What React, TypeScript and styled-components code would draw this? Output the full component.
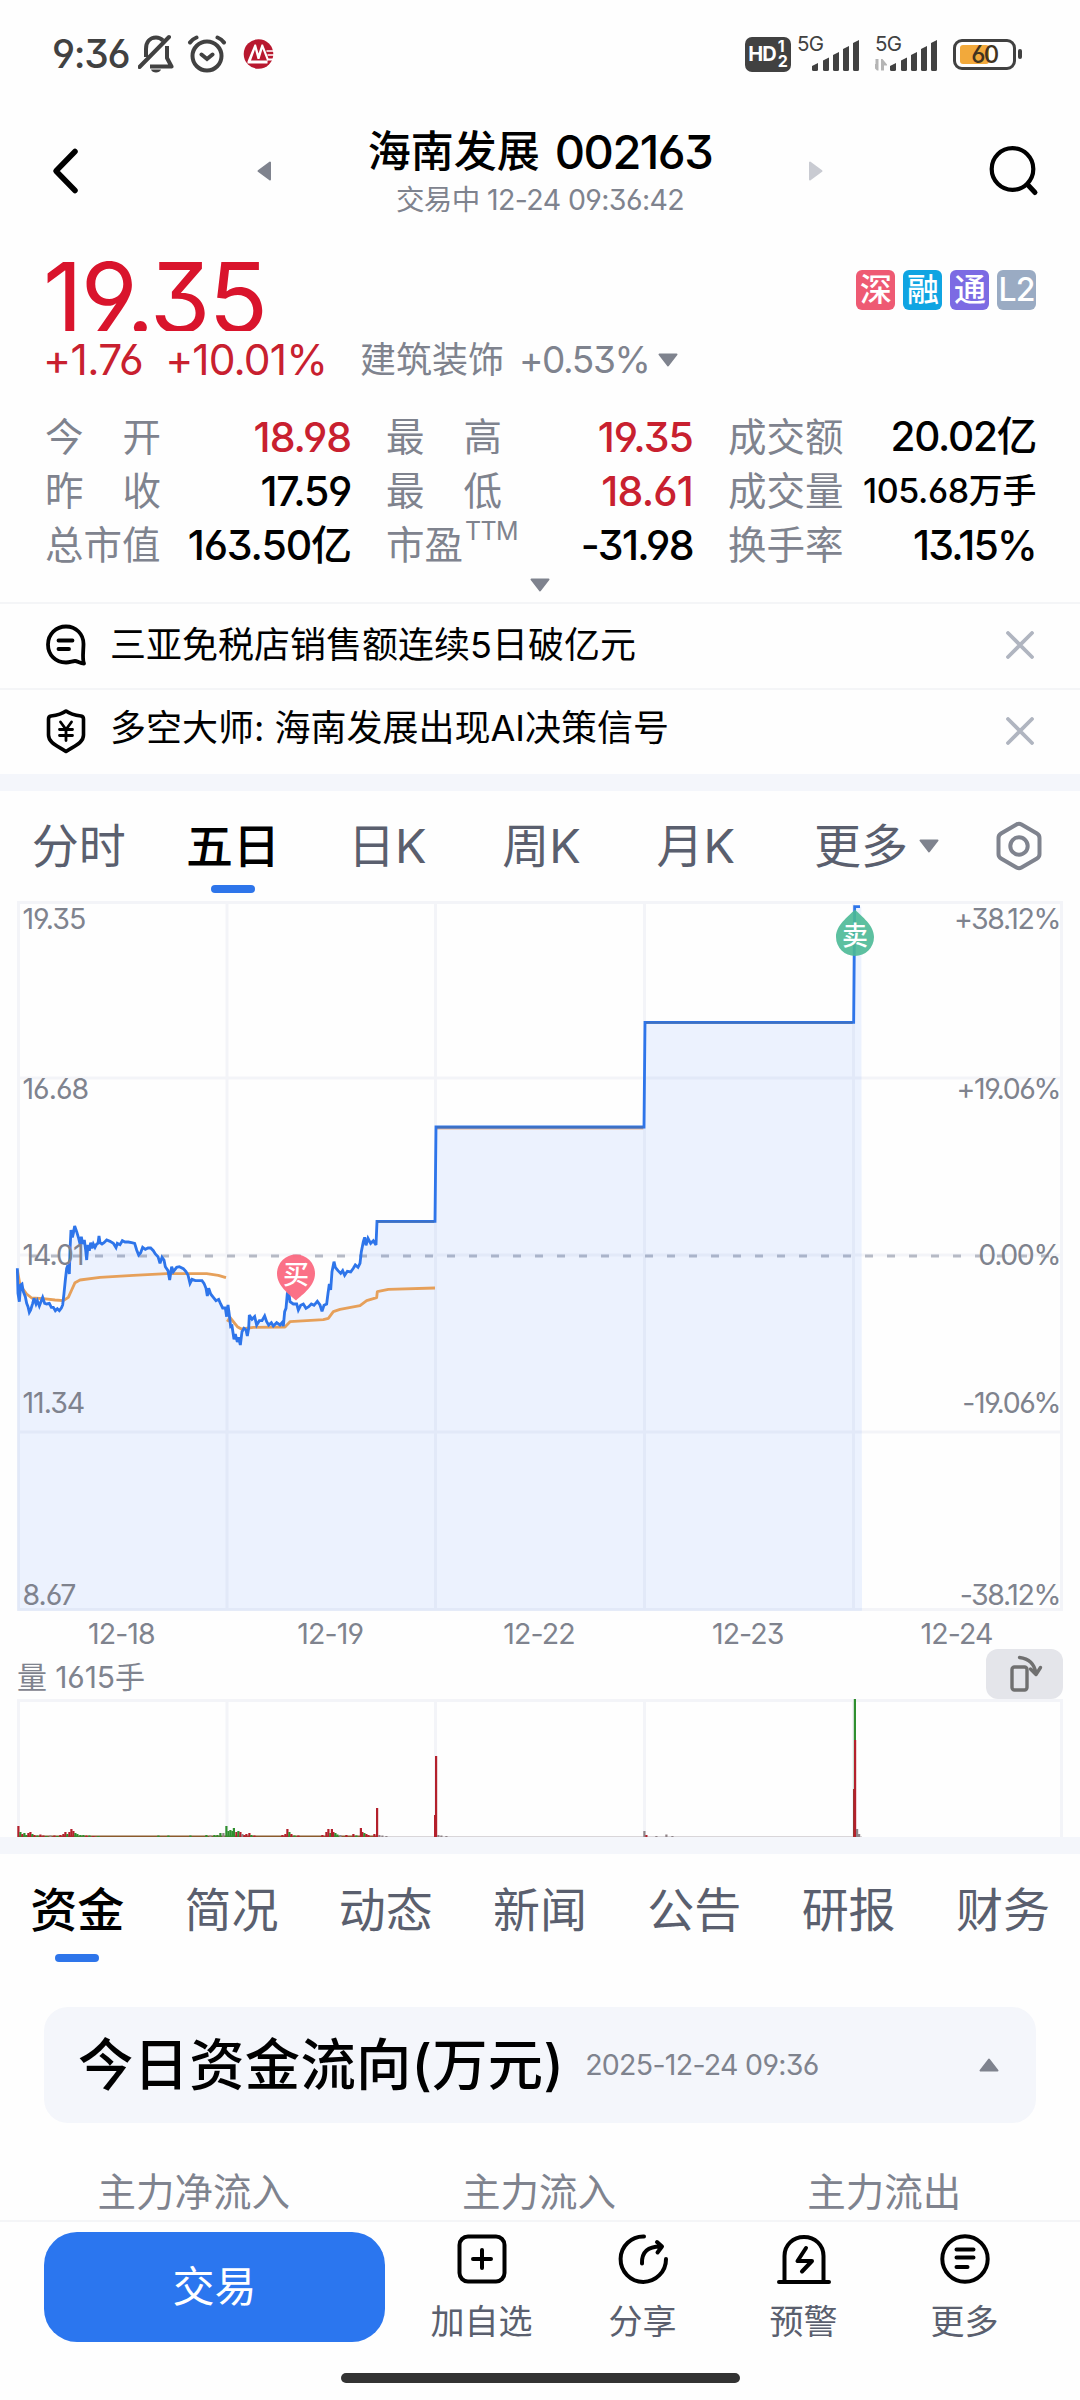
import React from 'react';
import styled, { createGlobalStyle } from 'styled-components';

const GREY = '#7f838e';
const SLATE = '#5a5f6e';
const RED = '#c8202f';
const BLUE = '#2e75ea';
const GRID = '#f3f4f8';

const Global = createGlobalStyle`
  * { box-sizing: border-box; }
  body {
    margin: 0;
    background: #fefefe;
    font-family: Inter, "Noto Sans CJK SC", sans-serif;
    font-feature-settings: "cv03", "cv04", "cv09", "calt" 0;
    color: #000;
  }
  svg { display: block; flex: none; }
`;

const Page = styled.div`
  width: 1080px;
  height: 2400px;
  overflow: hidden;
  display: flex;
  flex-direction: column;
  background: #fefefe;
`;

const Text = styled.span<{ $size: number; $ls?: number; $weight?: number; $color?: string; $lh?: number }>`
  font-size: ${p => p.$size}px;
  letter-spacing: ${p => p.$ls ?? 0}px;
  font-weight: ${p => p.$weight ?? 400};
  color: ${p => p.$color ?? '#000'};
  line-height: ${p => p.$lh ?? 54}px;
  white-space: nowrap;
`;

/* ---------- status bar ---------- */
const StatusBar = styled.div`
  height: 96px;
  padding: 12px 58px 0 52px;
  display: flex;
  align-items: center;
  justify-content: space-between;
`;
const StatusGroup = styled.div`
  display: flex;
  align-items: center;
`;
const HdBadge = styled.div`
  width: 46px;
  height: 35px;
  border-radius: 7px;
  background: #414141;
  color: #fff;
  display: flex;
  align-items: center;
  justify-content: center;
  gap: 2px;
`;
const HdStack = styled.div`
  display: flex;
  flex-direction: column;
`;
const Signal = styled.div<{ $gap: number }>`
  display: flex;
  position: relative;
  width: 64px;
  height: 36px;
  margin-left: ${p => p.$gap}px;
`;
const SignalLabel = styled.span`
  position: absolute;
  left: 0;
  top: -1px;
  font-size: 20.5px;
  line-height: 18px;
  letter-spacing: -0.8px;
  color: #414141;
`;
const Battery = styled.div`
  width: 63px;
  height: 31px;
  margin-left: 14px;
  border: 3px solid #414141;
  border-radius: 9px;
  padding: 3px 4px;
  position: relative;
`;
const BatteryFill = styled.div`
  width: 29px;
  height: 19px;
  border-radius: 3px;
  background: #f2a93b;
`;
const BatteryText = styled.span`
  position: absolute;
  inset: 0;
  text-align: center;
  font-size: 24px;
  line-height: 25px;
  letter-spacing: -1.5px;
  font-weight: 500;
  color: #413320;
`;
const BatteryNub = styled.div`
  width: 4px;
  height: 10px;
  margin-left: 2px;
  border-radius: 2px;
  background: #414141;
`;

/* ---------- nav ---------- */
const Nav = styled.div`
  height: 149px;
  display: grid;
  grid-template-columns: 257px 14px 1fr 14px 257px;
  align-items: center;
`;
const NavBack = styled.div`
  padding-left: 52px;
`;
const NavSearch = styled.div`
  display: flex;
  justify-content: flex-end;
  padding-right: 41px;
`;
const TitleBlock = styled.div`
  display: flex;
  flex-direction: column;
  align-items: center;
`;
const TitleLine = styled.div`
  display: flex;
  gap: 15px;
`;

/* ---------- quote ---------- */
const QuoteHead = styled.div`
  height: 86px;
  overflow: hidden;
  padding: 0 44px 0 43px;
  display: flex;
  justify-content: space-between;
`;
const Badges = styled.div`
  display: flex;
  gap: 8px;
  margin-top: 25px;
`;
const Badge = styled.div<{ $bg: string }>`
  width: 39px;
  height: 40px;
  border-radius: 6px;
  background: ${p => p.$bg};
  color: #fff;
  font-size: 32px;
  font-weight: 500;
  line-height: 39px;
  display: flex;
  justify-content: center;
  letter-spacing: -1px;
`;
const ChangeRow = styled.div`
  height: 58px;
  padding-left: 43px;
  display: flex;
  align-items: center;
`;
const Gap = styled.div<{ $w: number }>`
  width: ${p => p.$w}px;
  flex: none;
`;
const Stats = styled.div`
  margin-top: 21px;
  padding: 0 44px 0 45px;
  display: grid;
  grid-template-columns: 306px 307px 308px;
  column-gap: 35px;
`;
const Stat = styled.div`
  height: 54px;
  display: flex;
  justify-content: space-between;
`;
const StatLabel = styled.div`
  width: 116px;
  display: flex;
  justify-content: space-between;
  font-size: 38.5px;
  line-height: 54px;
  color: ${GREY};
  white-space: nowrap;
`;
const Sup = styled.span`
  font-size: 25px;
  line-height: 26px;
  margin-right: -16px;
  letter-spacing: -0.6px;
`;
const Expand = styled.div`
  height: 30px;
  display: flex;
  justify-content: center;
  padding-top: 6px;
`;

/* ---------- notices ---------- */
const Notice = styled.div`
  height: 86px;
  border-top: 2px solid #f4f5f7;
  padding: 0 46px 2px 45px;
  display: flex;
  align-items: center;
`;
const NoticeText = styled.div<{ $up?: number }>`
  flex: 1;
  margin-left: 24px;
  margin-bottom: ${p => p.$up ?? 0}px;
  font-size: 36px;
  line-height: 50px;
  white-space: nowrap;
`;
const Band = styled.div`
  height: 17px;
  flex: none;
  background: #f4f6fb;
`;

/* ---------- tabs ---------- */
const Tabs = styled.div<{ $h: number; $top: number; $left: number }>`
  height: ${p => p.$h}px;
  padding: ${p => p.$top}px 0 0 ${p => p.$left}px;
  display: flex;
`;
const Tab = styled.div<{ $on?: boolean; $line: number }>`
  width: 154.3px;
  flex: none;
  display: flex;
  flex-direction: column;
  align-items: center;
  font-size: 47px;
  line-height: 60px;
  white-space: nowrap;
  font-weight: ${p => (p.$on ? 500 : 400)};
  color: ${p => (p.$on ? '#000' : SLATE)};
  &::after {
    content: '';
    width: 44px;
    height: 8px;
    border-radius: 4px;
    margin-top: ${p => p.$line}px;
    background: ${p => (p.$on ? BLUE : 'transparent')};
  }
`;
const MoreTab = styled.div`
  display: flex;
  align-items: center;
  height: 60px;
  margin-left: 41px;
  gap: 11px;
  font-size: 47px;
  line-height: 60px;
  color: ${SLATE};
`;
const Settings = styled.div`
  margin: 5px 38px 0 auto;
`;

/* ---------- chart ---------- */
const ChartBox = styled.div`
  position: relative;
  height: 716px;
`;
const ScaleLabel = styled.span<{ $y: number; $right?: boolean }>`
  position: absolute;
  top: ${p => p.$y - 896 - 15}px;
  ${p => (p.$right ? 'right: 20px;' : 'left: 22.5px;')}
  font-size: 28.5px;
  line-height: 30px;
  letter-spacing: ${p => (p.$right ? -1.4 : -1)}px;
  color: ${GREY};
`;
const Pin = styled.span<{ $x: number; $y: number }>`
  position: absolute;
  left: ${p => p.$x - 13}px;
  top: ${p => p.$y - 896 - 15}px;
  width: 26px;
  text-align: center;
  font-size: 26px;
  line-height: 30px;
  font-weight: 500;
  color: #fff;
`;
const Dates = styled.div`
  height: 37px;
  padding: 0 19px 0 17px;
  display: grid;
  grid-template-columns: repeat(5, 1fr);
  justify-items: center;
`;
const VolumeHead = styled.div`
  height: 50px;
  padding: 0 17px;
  display: flex;
  justify-content: space-between;
`;
const Rotate = styled.div`
  width: 77px;
  height: 50px;
  border-radius: 12px;
  background: #e4e5ea;
  display: flex;
  align-items: center;
  justify-content: center;
`;

/* ---------- fund card ---------- */
const FundCard = styled.div`
  height: 116px;
  margin: 0 44px;
  border-radius: 24px;
  background: #f4f6fb;
  padding: 0 37px 0 34px;
  display: flex;
  align-items: center;
`;
const Toggle = styled.div`
  margin-left: auto;
`;
const FundLabels = styled.div`
  height: 97px;
  padding: 49px 23px 0 21px;
  display: grid;
  grid-template-columns: repeat(3, 1fr);
  justify-items: center;
`;

/* ---------- bottom ---------- */
const Bottom = styled.div`
  height: 180px;
  border-top: 2px solid #f4f5f7;
  display: flex;
  flex-direction: column;
  align-items: center;
`;
const Actions = styled.div`
  width: 100%;
  height: 141px;
  padding: 10px 34px 0 44px;
  display: flex;
`;
const Trade = styled.div`
  width: 341px;
  height: 110px;
  border-radius: 33px;
  margin-right: 16px;
  background: #2b76ef;
  color: #fff;
  font-size: 42px;
  line-height: 109px;
  text-align: center;
`;
const Action = styled.div`
  width: 161px;
  display: flex;
  flex-direction: column;
  align-items: center;
  padding-top: 1px;
  font-size: 34px;
  line-height: 40px;
  color: ${SLATE};
  gap: 17px;
`;
const HomeBar = styled.div`
  width: 399px;
  height: 10px;
  margin-top: 10px;
  border-radius: 5px;
  background: #333;
`;

type Dir = 'left' | 'right' | 'up' | 'down';
const TRI: Record<Dir, string> = {
  left: 'M13 1.5V18.5L1.5 10Z',
  right: 'M1 1.5V18.5L12.5 10Z',
  down: 'M1.5 1.5H18.5L10 12.5Z',
  up: 'M1.5 12.5H18.5L10 1.5Z',
};
const Triangle = ({ dir, color = GREY }: { dir: Dir; color?: string }) => {
  const side = dir === 'left' || dir === 'right';
  return (
    <svg width={side ? 14 : 20} height={side ? 20 : 14}>
      <path d={TRI[dir]} fill={color} stroke={color} strokeWidth="2" strokeLinejoin="round" />
    </svg>
  );
};

const Bars = ({ data }: { data?: boolean }) => (
  <svg width="64" height="36" viewBox="0 0 64 36">
    {[[15, 28], [26, 22.5], [36, 17], [46, 11], [56, 5]].map(([x, y]) => (
      <path key={x} d={`M${x} ${y + 2}L${x + 6} ${y - 1}V33.5a1.5 1.5 0 0 1-1.5 1.5H${x + 1.5}a1.5 1.5 0 0 1-1.5-1.5Z`} fill="#414141" />
    ))}
    {data && (
      <path d="M3.500 23V34.500H2L-3.500 29V28H0.500V23ZM6 34.500V23H7.500L12 28.500V29.500H9V34.500Z" fill="#b5b5b5" />
    )}
  </svg>
);

const CloseX = () => (
  <svg width="28" height="28" fill="none" stroke="#b0b5c0" strokeWidth="3.8" strokeLinecap="round">
    <path d="M2 2L26 26M26 2L2 26" />
  </svg>
);

const PRICE =
  '52,1165 54,1240 58,1265 62,1215 66,1212 70,1235 76,1250 80,1270 84,1280 88,1297 92,1290 98,1270 102,1255 108,1272 112,1262 118,1278 124,1262 128,1252 134,1270 140,1272 148,1270 154,1282 160,1282 166,1292 172,1286 178,1292 184,1284 188,1275 192,1240 196,1200 200,1165 204,1155 208,1182 210,1110 213,1050 217,1072 220,1060 224,1038 230,1055 236,1075 240,1092 244,1070 248,1092 253,1080 257,1110 260,1140 264,1095 268,1112 272,1088 276,1105 280,1092 285,1102 290,1092 294,1090 297,1068 300,1088 306,1092 312,1088 320,1080 330,1084 340,1090 348,1103 352,1090 360,1094 367,1082 375,1086 385,1086 395,1088 404,1090 410,1110 416,1125 422,1118 428,1102 436,1108 444,1104 452,1104 460,1112 466,1122 474,1130 480,1150 486,1132 492,1140 496,1160 504,1172 509,1200 515,1160 520,1175 530,1162 538,1160 550,1166 558,1175 564,1185 570,1210 576,1198 586,1202 596,1202 606,1202 612,1210 618,1225 622,1248 626,1225 632,1242 640,1252 648,1262 656,1258 662,1272 668,1284 676,1284 680,1310 684,1275 688,1305 692,1340 696,1338 702,1378 706,1362 712,1386 716,1372 721,1395 726,1355 732,1345 738,1350 742,1368 746,1345 748,1305 756,1318 764,1310 770,1335 778,1322 786,1322 794,1308 800,1325 806,1335 814,1328 820,1338 830,1328 840,1335 846,1328 850,1338 854,1295 858,1285 862,1240 866,1232 870,1265 880,1272 890,1272 895,1290 902,1276 910,1272 918,1285 926,1280 934,1272 942,1276 952,1264 960,1275 966,1294 972,1276 980,1272 984,1240 988,1212 992,1230 996,1175 1002,1145 1006,1162 1014,1172 1022,1180 1028,1172 1034,1186 1042,1174 1052,1176 1060,1165 1066,1155 1074,1162 1080,1150 1084,1115 1090,1085 1094,1072 1098,1096 1104,1075 1112,1090 1120,1082 1128,1095 1131,1024 1305,1024 1308,741 1932,741 1935,427 2561,427 2564,80 2580,80';
const AVG1 = '52,1170 60,1215 80,1242 95,1254 130,1256 165,1260 190,1262 205,1252 215,1230 225,1208 240,1200 300,1192 400,1186 500,1181 620,1181 655,1186 678,1193';
const AVG2 = '682,1325 690,1312 700,1325 712,1340 724,1347 760,1342 855,1341 870,1325 970,1319 985,1315 1000,1295 1020,1288 1080,1277 1100,1262 1130,1253 1132,1235 1165,1228 1305,1224';

const V_LINES = [18.5, 227, 435.5, 644.5, 853.5, 1061.5];

const PriceChart = () => (
  <svg width="1080" height="716" viewBox="0 896 1080 716">
    <g stroke={GRID} strokeWidth="3" fill="none">
      {V_LINES.map(x => <path key={x} d={`M${x} 901V1611`} />)}
      {[902.5, 1078, 1255, 1432, 1609.5].map(y => <path key={y} d={`M17 ${y}H1063`} />)}
    </g>
    <path d="M29 1256H1057" stroke="#b6bac5" strokeWidth="3" strokeDasharray="8 14" />
    <g transform="translate(0 880) scale(0.33333)" fill="none" strokeLinejoin="round">
      <polygon points={`52,2192 ${PRICE} 2584,80 2586,2192`} fill="rgba(50,125,250,0.09)" />
      <polyline points={AVG1} stroke="#e6a05a" strokeWidth="8.5" />
      <polyline points={AVG2} stroke="#e6a05a" strokeWidth="8.5" />
      <path d="M1310 746H1930" stroke="#e6b08a" strokeWidth="5" />
      <polyline points={PRICE} stroke={BLUE} strokeWidth="8.5" strokeLinejoin="miter" strokeMiterlimit="3" />
      <path d="M1131 1025H1303M1310 742H1930M1938 428H2558" stroke="#3f70c0" strokeWidth="6" />
    </g>
    <path d="M296 1300.500C289 1294 277 1286 277 1273.500A19 19 0 0 1 315 1273.500C315 1286 303 1294 296 1300.500Z" fill="#fb6b82" opacity="0.96" />
    <path d="M855 909.500C862 917 874 925 874 937A19 19 0 0 1 836 937C836 925 848 917 855 909.500Z" fill="#4bb996" opacity="0.9" />
  </svg>
);

/* each bar: x, height, colour key */
const VOLUME: [number, number, string][] = [
  [18, 11, 'r'], [20, 5, 'g'], [22, 3, 'r'], [24, 4, 'g'], [26, 2, 'g'], [28, 4, 'r'], [30, 5, 'r'], [32, 3, 'g'], [34, 2, 'r'], [37, 1.5, 'g'], [40, 2.5, 'r'], [43, 1.5, 'r'], [46, 1, 'g'], [50, 1.5, 'n'], [54, 1.5, 'r'], [57, 1, 'g'],
  [60, 2, 'r'], [63, 3, 'r'], [65, 5, 'r'], [67, 3, 'g'], [69, 5, 'r'], [71, 8, 'r'], [73, 6, 'r'], [75, 4, 'g'], [77, 3, 'g'], [80, 2, 'g'], [83, 2, 'g'], [86, 1.5, 'r'], [89, 1.5, 'g'], [93, 1, 'r'], [98, 1, 'g'],
  [158, 1.5, 'g'], [168, 1.5, 'g'], [190, 1.5, 'g'], [206, 2, 'g'], [210, 1.5, 'n'], [214, 2, 'g'], [217, 2, 'g'], [220, 4, 'g'], [223, 4, 'n'], [226, 11, 'g'], [228, 6, 'g'], [230, 7, 'g'], [232, 6, 'g'], [233.5, 9, 'g'], [236, 5, 'r'], [238, 6, 'g'], [240, 5, 'r'], [242, 3, 'n'], [244, 2, 'r'], [246, 3, 'r'], [249, 4, 'r'], [251, 2, 'g'], [254, 1.5, 'r'],
  [282, 2, 'r'], [285, 3, 'r'], [287, 8, 'r'], [289, 5, 'g'], [291, 3, 'r'], [294, 1.5, 'g'], [298, 1.5, 'r'], [322, 2, 'r'], [326, 5, 'r'], [328, 8, 'r'], [330, 4, 'g'], [331.5, 8, 'r'], [333, 5, 'r'], [335, 4, 'g'], [337, 2.5, 'g'], [340, 2, 'n'], [346, 2, 'r'], [353, 3, 'r'], [356, 1.5, 'g'],
  [360.5, 9, 'r'], [362, 5, 'r'], [364, 4, 'g'], [366, 3, 'r'], [368, 2, 'r'], [374, 3, 'r'], [376.7, 29, 'r'], [379, 2, 'n'], [382, 1.5, 'n'], [386, 1, 'n'], [434.7, 22, 'r'], [435.7, 81, 'r'], [438, 2, 'n'], [441, 1.5, 'n'], [446, 1, 'n'], [644, 6, 'n'], [646, 2, 'r'], [656, 1, 'n'], [666, 2.5, 'n'], [672, 1, 'n'],
  [853.7, 48, 'r'], [854.5, 138, 'g'], [854.7, 97, 'r'], [856.7, 8, 'n'], [858.7, 3, 'n'],
];
const VCOLOR: Record<string, string> = { r: '#b3202c', g: '#2f8f2f', n: '#8f8488' };

const VolumeChart = () => (
  <svg width="1080" height="138" viewBox="0 1699 1080 138">
    <g stroke={GRID} strokeWidth="3">
      {V_LINES.map(x => <path key={x} d={`M${x} 1699V1837`} />)}
      <path d="M17 1700.500H1063" />
    </g>
    <path d="M18 1836.300H376" stroke="#8a5a2c" strokeWidth="1.400" />
    <path d="M376 1836.600H862" stroke="#c9c5ca" strokeWidth="0.800" />
    {VOLUME.map(([x, h, c]) => (
      <rect key={x} x={x - 0.7} y={1837 - h} width="2.2" height={h} fill={VCOLOR[c]} />
    ))}
  </svg>
);

const STATS: [string[], string, string, number, number][] = [
  [['今', '开'], '18.98', RED, 41, -1],
  [['最', '高'], '19.35', RED, 41, -0.9],
  [['成交额'], '20.02亿', '#000', 40.5, -1.2],
  [['昨', '收'], '17.59', '#000', 41, -1.3],
  [['最', '低'], '18.61', RED, 41, -0.8],
  [['成交量'], '105.68万手', '#000', 34, -0.4],
  [['总市值'], '163.50亿', '#000', 41, -1.1],
  [['市盈', 'TTM'], '-31.98', '#000', 41, -1.6],
  [['换手率'], '13.15%', '#000', 41, -1.8],
];

const App = () => (
  <>
    <Global />
    <Page>
      <StatusBar>
        <StatusGroup>
          <Text $size={39} $ls={-1.3} $weight={500} $color="#414141">9:36</Text>
          <Gap $w={9} />
          <svg width="36" height="40" viewBox="0 0 36 40" fill="none" stroke="#414141" strokeWidth="4" strokeLinejoin="round">
            <path d="M8 23V15C8 8 12 3.500 18 3.500C21 3.500 23 4.500 25 6.500M29 12V24L33.500 32.500H12" />
            <path d="M1.500 33L31 3" strokeLinecap="round" />
            <path d="M13 35.500C14 39.500 22 39.500 23 35.500Z" fill="#414141" stroke="none" />
          </svg>
          <Gap $w={13} />
          <svg width="40" height="38" viewBox="0 0 40 38" fill="none" stroke="#414141" strokeWidth="4" strokeLinecap="round">
            <circle cx="20" cy="21" r="14.500" />
            <path d="M14.500 19.500L20 24L25.500 19.500M3 7.500Q5.500 4 9.500 2.500M37 7.500Q34.500 4 30.500 2.500" />
          </svg>
          <Gap $w={16} />
          <svg width="32" height="32" viewBox="0 0 32 32">
            <circle cx="15.500" cy="16" r="14.800" fill="#b8182f" />
            <path d="M5.500 21L11.500 6.500H13L15.500 15.500L18.500 6.500H20L25.500 20.500H31V22.500H24L19.500 11L16.500 21H14.500L12 11.500L8 22.500H24.500V25.500H4.500V23.500Z" fill="#fff" />
            <path d="M23.500 13H31M24.500 17H31" stroke="#fff" strokeWidth="1.500" />
          </svg>
        </StatusGroup>
        <StatusGroup>
          <HdBadge>
            <Text $size={20} $ls={-1} $weight={700} $color="#fff" $lh={36}>HD</Text>
            <HdStack>
              <Text $size={16} $weight={700} $color="#fff" $lh={15}>1</Text>
              <Text $size={16} $weight={700} $color="#fff" $lh={15}>2</Text>
            </HdStack>
          </HdBadge>
          <Signal $gap={6}><SignalLabel>5G</SignalLabel><Bars /></Signal>
          <Signal $gap={14}><SignalLabel>5G</SignalLabel><Bars data /></Signal>
          <Battery><BatteryFill /><BatteryText>60</BatteryText></Battery>
          <BatteryNub />
        </StatusGroup>
      </StatusBar>

      <Nav>
        <NavBack>
          <svg width="28" height="48" fill="none" stroke="#000" strokeWidth="5.500" strokeLinecap="round" strokeLinejoin="round">
            <path d="M23 4.500L4 24L23 43.500" />
          </svg>
        </NavBack>
        <Triangle dir="left" />
        <TitleBlock>
          <TitleLine>
            <Text $size={43} $weight={500} $lh={59}>海南发展</Text>
            <Text $size={47} $weight={500} $lh={59} $ls={-1.5}>002163</Text>
          </TitleLine>
          <Text $size={28.5} $lh={38} $ls={-0.6} $color={GREY}>交易中 12-24 09:36:42</Text>
        </TitleBlock>
        <Triangle dir="right" color="#c9cbd2" />
        <NavSearch>
          <svg width="50" height="52" viewBox="0 0 50 52" fill="none" stroke="#000" strokeWidth="4.200">
            <circle cx="23.500" cy="24" r="20.800" />
            <path d="M39 40L46 47.500" strokeWidth="5" strokeLinecap="round" />
          </svg>
        </NavSearch>
      </Nav>

      <QuoteHead>
        <Text $size={98} $lh={105} $ls={-2} $color="#d9142c">19.35</Text>
        <Badges>
          <Badge $bg="#ee5a73">深</Badge>
          <Badge $bg="#0fa4e2">融</Badge>
          <Badge $bg="#7c6be3">通</Badge>
          <Badge $bg="#9aabc3">L2</Badge>
        </Badges>
      </QuoteHead>
      <ChangeRow>
        <Text $size={42.5} $ls={-0.6} $color={RED}>+1.76</Text>
        <Gap $w={22} />
        <Text $size={42.5} $ls={-0.9} $color={RED}>+10.01%</Text>
        <Gap $w={33} />
        <Text $size={36} $color={GREY}>建筑装饰</Text>
        <Gap $w={15} />
        <Text $size={37} $ls={-1.4} $color={GREY}>+0.53%</Text>
        <Gap $w={9} />
        <Triangle dir="down" />
      </ChangeRow>
      <Stats>
        {STATS.map(([label, value, color, size, ls]) => (
          <Stat key={label.join('')}>
            <StatLabel>
              {label.map(part => part === 'TTM' ? <Sup key={part}>{part}</Sup> : <span key={part}>{part}</span>)}
            </StatLabel>
            <Text $size={size} $ls={ls} $weight={500} $color={color}>{value}</Text>
          </Stat>
        ))}
      </Stats>
      <Expand><Triangle dir="down" /></Expand>

      <Notice>
        <svg width="41" height="42" viewBox="0 0 41 42" fill="none" stroke="#000" strokeWidth="3.800" strokeLinecap="round" strokeLinejoin="round">
          <path d="M38.500 20C38.500 10 31 2.500 21 2.500S3 10 3 20.500S10.500 38.500 21 38.500C25 38.500 27.500 37 30 37S35 39.500 39 39.500C37 36 38.500 26 38.500 20Z" />
          <path d="M13.500 16.500H27.500M13.500 25H24" />
        </svg>
        <NoticeText>三亚免税店销售额连续5日破亿元</NoticeText>
        <CloseX />
      </Notice>
      <Notice>
        <svg width="41" height="46" viewBox="0 0 41 46" fill="none" stroke="#000" strokeWidth="3.600" strokeLinecap="round" strokeLinejoin="round">
          <path d="M21 3C25 6 32 7.500 36 8Q38.500 8.500 38.500 11V27C38.500 35 29 38 21 43.500C13 38 3.500 35 3.500 27V11Q3.500 8.500 6 8C10 7.500 17 6 21 3Z" />
          <path d="M15.500 14L21 21.500L26.500 14M21 21.500V32.500M14.500 21.500H27.500M14.500 27.500H27.500" strokeWidth="2.800" />
        </svg>
        <NoticeText $up={6}>多空大师: 海南发展出现AI决策信号</NoticeText>
        <CloseX />
      </Notice>
      <Band />

      <Tabs $h={105} $top={25} $left={1.5}>
        {['分时', '五日', '日K', '周K', '月K'].map(t => (
          <Tab key={t} $on={t === '五日'} $line={9}>{t}</Tab>
        ))}
        <MoreTab>更多<Triangle dir="down" /></MoreTab>
        <Settings>
          <svg width="46" height="50" viewBox="0 0 46 50" fill="none" stroke={GREY} strokeWidth="4" strokeLinejoin="round">
            <path d="M20.500 3.500Q23 2 25.500 3.500L41 12.500Q43.500 14 43.500 17V33Q43.500 36 41 37.500L25.500 46.500Q23 48 20.500 46.500L5 37.500Q2.500 36 2.500 33V17Q2.500 14 5 12.500Z" />
            <circle cx="23" cy="25" r="8.700" />
          </svg>
        </Settings>
      </Tabs>

      <ChartBox>
        <PriceChart />
        <ScaleLabel $y={919}>19.35</ScaleLabel>
        <ScaleLabel $y={1089}>16.68</ScaleLabel>
        <ScaleLabel $y={1255}>14.01</ScaleLabel>
        <ScaleLabel $y={1403}>11.34</ScaleLabel>
        <ScaleLabel $y={1595}>8.67</ScaleLabel>
        <ScaleLabel $y={919} $right>+38.12%</ScaleLabel>
        <ScaleLabel $y={1089} $right>+19.06%</ScaleLabel>
        <ScaleLabel $y={1255} $right>0.00%</ScaleLabel>
        <ScaleLabel $y={1403} $right>-19.06%</ScaleLabel>
        <ScaleLabel $y={1595} $right>-38.12%</ScaleLabel>
        <Pin $x={296} $y={1275}>买</Pin>
        <Pin $x={855} $y={936}>卖</Pin>
      </ChartBox>
      <Dates>
        {['12-18', '12-19', '12-22', '12-23', '12-24'].map(d => (
          <Text key={d} $size={28.5} $ls={-0.9} $lh={43} $color={GREY}>{d}</Text>
        ))}
      </Dates>
      <VolumeHead>
        <Text $size={30} $ls={-0.1} $lh={57} $color={GREY}>量 1615手</Text>
        <Rotate>
          <svg width="36" height="40" viewBox="0 0 36 40" fill="none" stroke="#707070" strokeWidth="3.400" strokeLinejoin="round" strokeLinecap="round">
            <rect x="5" y="13" width="15" height="23" rx="2.500" />
            <path d="M12.500 3.500C21.500 4.500 27.500 10 29 19.500M23.500 15L29 20.500L33.500 13.500" />
          </svg>
        </Rotate>
      </VolumeHead>
      <VolumeChart />
      <Band />

      <Tabs $h={153} $top={26} $left={0}>
        {['资金', '简况', '动态', '新闻', '公告', '研报', '财务'].map(t => (
          <Tab key={t} $on={t === '资金'} $line={14}>{t}</Tab>
        ))}
      </Tabs>
      <FundCard>
        <Text $size={55.3} $weight={500} $lh={108} $ls={0.3}>今日资金流向(万元)</Text>
        <Gap $w={21} />
        <Text $size={28.5} $ls={-0.7} $color={GREY}>2025-12-24 09:36</Text>
        <Toggle><Triangle dir="up" /></Toggle>
      </FundCard>
      <FundLabels>
        {['主力净流入', '主力流入', '主力流出'].map(t => (
          <Text key={t} $size={38.5} $lh={41} $color={GREY}>{t}</Text>
        ))}
      </FundLabels>

      <Bottom>
        <Actions>
          <Trade>交易</Trade>
          <Action>
            <svg width="54" height="52" viewBox="-27 -26 54 52" fill="none" stroke="#000" strokeWidth="4" strokeLinecap="round">
              <rect x="-22.500" y="-22.500" width="45" height="45" rx="8.500" />
              <path d="M-9 0H9M0 -9V9" />
            </svg>
            加自选
          </Action>
          <Action>
            <svg width="54" height="52" viewBox="-27 -26 54 52" fill="none" stroke="#000" strokeWidth="4" strokeLinecap="round" strokeLinejoin="round">
              <path d="M1 -22.500A22.700 22.700 0 1 0 23 0" />
              <path d="M-1 4.500C-1.500 -7 5 -13 18.500 -12.500M14 -17L19 -12.500L14.500 -6.500" />
            </svg>
            分享
          </Action>
          <Action>
            <svg width="54" height="52" viewBox="-27 -26 54 52" fill="none" stroke="#000" strokeWidth="4" strokeLinecap="round" strokeLinejoin="round">
              <path d="M-19.500 22.500V-3C-19.500 -14 -11 -22 0 -22S19.500 -14 19.500 -3V22.500M-25 23H25" />
              <path d="M2 -11L-6.500 2H8L-2 12.500" />
            </svg>
            预警
          </Action>
          <Action>
            <svg width="54" height="52" viewBox="-27 -26 54 52" fill="none" stroke="#000" strokeWidth="4" strokeLinecap="round">
              <circle r="22.700" />
              <path d="M-8.500 -9.500H8.500M-8.500 -1.500H8.500M-8.500 8H2.500" />
            </svg>
            更多
          </Action>
        </Actions>
        <HomeBar />
      </Bottom>
    </Page>
  </>
);

export default App;
